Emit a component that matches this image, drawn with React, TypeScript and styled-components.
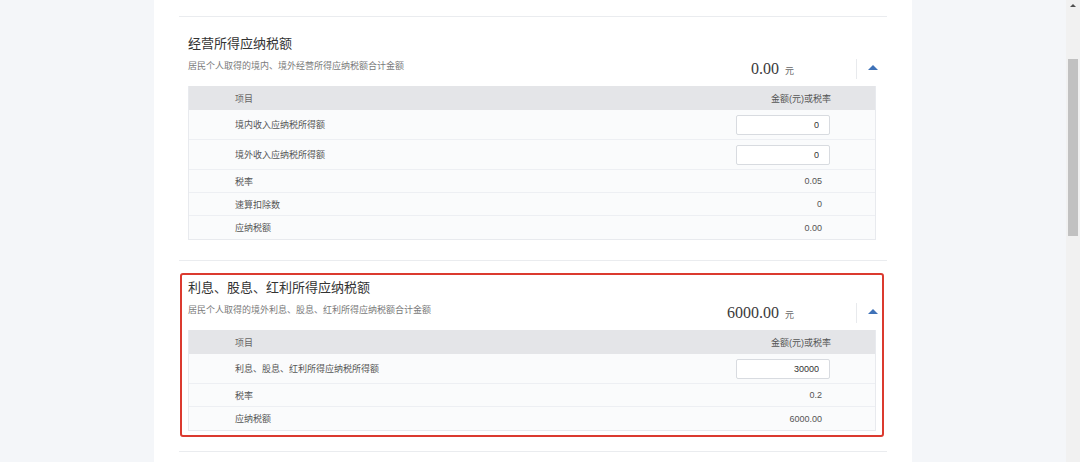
import React from "react";
import styled, { createGlobalStyle } from "styled-components";

const GlobalStyle = createGlobalStyle`
  html, body { margin: 0; padding: 0; }
  body {
    font-family: "Liberation Sans", "Noto Sans CJK SC", sans-serif;
    background: #f4f6f9;
    color: #333;
  }
`;

const Screen = styled.div`
  display: flex;
  height: 462px;
  overflow: hidden;
`;

const Main = styled.main`
  flex: 1;
  display: flex;
  justify-content: center;
  background: #f4f6f9;
`;

const Panel = styled.div`
  width: 758px;
  box-sizing: border-box;
  background: #fff;
  padding: 16px 25px 0;
`;

const Rule = styled.div`
  height: 1px;
  background: #eaecef;
`;

const Section = styled.section<{ $highlighted?: boolean }>`
  position: relative;
  padding: 18px 9px 20px;

  ${({ $highlighted }) =>
    $highlighted &&
    `
    &::after {
      content: "";
      position: absolute;
      top: 12px;
      left: 1px;
      right: 3px;
      bottom: 14px;
      border: 2px solid #db3a2f;
      border-radius: 3px;
      pointer-events: none;
    }
  `}
`;

const Title = styled.h3`
  margin: 0;
  font-size: 13px;
  line-height: 18px;
  font-weight: normal;
  color: #333;
`;

const SubRow = styled.div`
  display: flex;
  justify-content: space-between;
  align-items: center;
  height: 22px;
  margin-top: 5px;
`;

const Subtitle = styled.p`
  margin: 0;
  align-self: flex-start;
  font-size: 9px;
  line-height: 16px;
  color: #7a7a7a;
`;

const Summary = styled.div`
  display: flex;
  align-items: center;
`;

const AmountGroup = styled.div`
  display: flex;
  align-items: baseline;
  margin-right: 62px;
`;

const Amount = styled.span`
  font-family: "Liberation Serif", serif;
  font-size: 16px;
  line-height: 20px;
  color: #3a3a3a;
`;

const Unit = styled.span`
  margin-left: 6px;
  font-size: 9px;
  color: #666;
`;

const Separator = styled.span`
  width: 1px;
  height: 20px;
  background: #e8eaed;
`;

const Toggle = styled.button`
  width: 21px;
  height: 20px;
  padding: 0;
  border: 0;
  background: none;
  display: flex;
  align-items: center;
  justify-content: flex-end;
  cursor: pointer;

  &::before {
    content: "";
    width: 0;
    height: 0;
    margin-top: -3px;
    border-left: 5px solid transparent;
    border-right: 5px solid transparent;
    border-bottom: 5px solid #3f72b8;
  }
`;

const Table = styled.div`
  margin: 6px 2px 0 0;
  border: 1px solid #e8eaee;
  border-top: 0;
  font-size: 9px;
`;

const Row = styled.div<{ $head?: boolean; $tall?: boolean }>`
  display: flex;
  align-items: center;
  box-sizing: border-box;
  height: ${({ $head, $tall }) => ($head ? 24 : $tall ? 30 : 23)}px;
  background: ${({ $head }) => ($head ? "#e4e5e8" : "#fafbfc")};
  border-bottom: ${({ $head }) => ($head ? "0" : "1px solid #edeff3")};
  color: ${({ $head }) => ($head ? "#666" : "#555")};

  &:last-child {
    border-bottom: 0;
  }
`;

const Label = styled.div`
  flex: 1;
  padding-left: 46px;
`;

const Value = styled.div<{ $pad: number }>`
  padding-right: ${({ $pad }) => $pad}px;
  text-align: right;
  color: #555;
`;

const NumberInput = styled.input`
  width: 94px;
  height: 20px;
  box-sizing: border-box;
  border: 1px solid #d8dbe0;
  border-radius: 2px;
  padding: 0 10px;
  background: #fff;
  text-align: right;
  font-family: inherit;
  font-size: 9px;
  color: #333;
  outline: none;
`;

const Scrollbar = styled.div`
  width: 14px;
  background: #f1f1f1;
  display: flex;
  flex-direction: column;
  align-items: center;
`;

const ScrollArrow = styled.div`
  height: 14px;
  display: flex;
  align-items: center;
  justify-content: center;

  &::before {
    content: "";
    width: 0;
    height: 0;
    margin-top: -4px;
    border-left: 3px solid transparent;
    border-right: 3px solid transparent;
    border-bottom: 3px solid #505050;
  }
`;

const Thumb = styled.div`
  width: 10px;
  height: 177px;
  margin-top: 45px;
  background: #c1c1c1;
`;

type Item = { label: string; value: string; input?: boolean };

type TaxBlock = {
  title: string;
  note: string;
  total: string;
  items: Item[];
  highlighted?: boolean;
};

const blocks: TaxBlock[] = [
  {
    title: "经营所得应纳税额",
    note: "居民个人取得的境内、境外经营所得应纳税额合计金额",
    total: "0.00",
    items: [
      { label: "境内收入应纳税所得额", value: "0", input: true },
      { label: "境外收入应纳税所得额", value: "0", input: true },
      { label: "税率", value: "0.05" },
      { label: "速算扣除数", value: "0" },
      { label: "应纳税额", value: "0.00" },
    ],
  },
  {
    title: "利息、股息、红利所得应纳税额",
    note: "居民个人取得的境外利息、股息、红利所得应纳税额合计金额",
    total: "6000.00",
    highlighted: true,
    items: [
      { label: "利息、股息、红利所得应纳税所得额", value: "30000", input: true },
      { label: "税率", value: "0.2" },
      { label: "应纳税额", value: "6000.00" },
    ],
  },
];

function TaxSection({ block }: { block: TaxBlock }) {
  return (
    <Section $highlighted={block.highlighted}>
      <Title>{block.title}</Title>
      <SubRow>
        <Subtitle>{block.note}</Subtitle>
        <Summary>
          <AmountGroup>
            <Amount>{block.total}</Amount>
            <Unit>元</Unit>
          </AmountGroup>
          <Separator />
          <Toggle aria-label="收起" />
        </Summary>
      </SubRow>
      <Table>
        <Row $head>
          <Label>项目</Label>
          <Value $pad={44}>金额(元)或税率</Value>
        </Row>
        {block.items.map((item) => (
          <Row key={item.label} $tall={item.input}>
            <Label>{item.label}</Label>
            {item.input ? (
              <Value $pad={45}>
                <NumberInput defaultValue={item.value} />
              </Value>
            ) : (
              <Value $pad={53}>{item.value}</Value>
            )}
          </Row>
        ))}
      </Table>
    </Section>
  );
}

export default function App() {
  return (
    <>
      <GlobalStyle />
      <Screen>
        <Main>
          <Panel>
            <Rule />
            {blocks.map((block) => (
              <React.Fragment key={block.title}>
                <TaxSection block={block} />
                <Rule />
              </React.Fragment>
            ))}
          </Panel>
        </Main>
        <Scrollbar>
          <ScrollArrow />
          <Thumb />
        </Scrollbar>
      </Screen>
    </>
  );
}
